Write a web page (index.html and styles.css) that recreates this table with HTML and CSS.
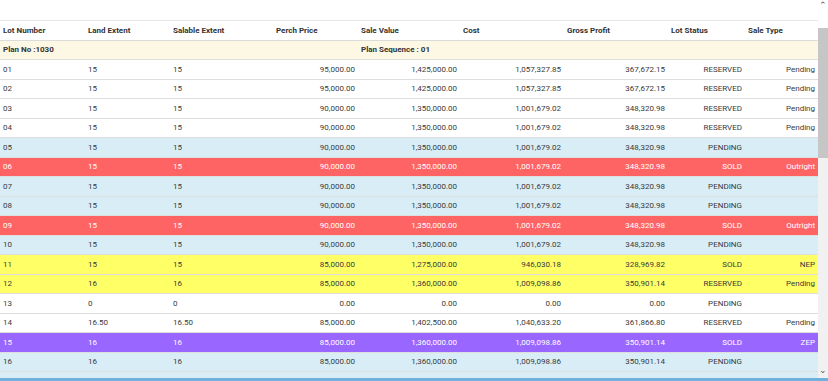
FILE: index.html
```html
<!DOCTYPE html>
<html>
<head>
	<title>Lots</title>
	<meta name="viewport" content="width=device-width, initial-scale=1.0">
	<link rel="stylesheet" href="styles.css">
</head>
<body>

	<div class="panel">
		<div class="grid">
			<div class="gap"></div>
			<table id="table">
				<colgroup>
					<col class="c1"><col class="c2"><col class="c3"><col class="c4"><col class="c5">
					<col class="c6"><col class="c7"><col class="c8"><col class="c9">
				</colgroup>
				<tr class="frst">
					<th>Lot Number</th>
					<th>Land Extent</th>
					<th>Salable Extent</th>
					<th>Perch Price</th>
					<th>Sale Value</th>
					<th>Cost</th>
					<th>Gross Profit</th>
					<th>Lot Status</th>
					<th>Sale Type</th>
				</tr>
				<tr class="plan">
					<td colspan="4">Plan No :1030</td>
					<td colspan="5">Plan Sequence : 01</td>
				</tr>
			</table>
		</div>
		<div class="bar">
			<span class="arrow">&#8963;</span>
			<div class="thumb"></div>
			<div class="track"></div>
			<span class="arrow down">&#8964;</span>
		</div>
	</div>
	<div class="foot"></div>

	<script type="text/javascript">

		let lots = [
			["01","15","15","95,000.00","1,425,000.00","1,057,327.85","367,672.15","RESERVED","Pending",""],
			["02","15","15","95,000.00","1,425,000.00","1,057,327.85","367,672.15","RESERVED","Pending",""],
			["03","15","15","90,000.00","1,350,000.00","1,001,679.02","348,320.98","RESERVED","Pending",""],
			["04","15","15","90,000.00","1,350,000.00","1,001,679.02","348,320.98","RESERVED","Pending",""],
			["05","15","15","90,000.00","1,350,000.00","1,001,679.02","348,320.98","PENDING","","info"],
			["06","15","15","90,000.00","1,350,000.00","1,001,679.02","348,320.98","SOLD","Outright","sold"],
			["07","15","15","90,000.00","1,350,000.00","1,001,679.02","348,320.98","PENDING","","info"],
			["08","15","15","90,000.00","1,350,000.00","1,001,679.02","348,320.98","PENDING","","info"],
			["09","15","15","90,000.00","1,350,000.00","1,001,679.02","348,320.98","SOLD","Outright","sold"],
			["10","15","15","90,000.00","1,350,000.00","1,001,679.02","348,320.98","PENDING","","info"],
			["11","15","15","85,000.00","1,275,000.00","946,030.18","328,969.82","SOLD","NEP","nep"],
			["12","16","16","85,000.00","1,360,000.00","1,009,098.86","350,901.14","RESERVED","Pending","nep"],
			["13","0","0","0.00","0.00","0.00","0.00","PENDING","",""],
			["14","16.50","16.50","85,000.00","1,402,500.00","1,040,633.20","361,866.80","RESERVED","Pending",""],
			["15","16","16","85,000.00","1,360,000.00","1,009,098.86","350,901.14","SOLD","ZEP","zep"],
			["16","16","16","85,000.00","1,360,000.00","1,009,098.86","350,901.14","PENDING","","info"],
			["17","16","16","85,000.00","1,360,000.00","1,009,098.86","350,901.14","PENDING","","info"]
		];

		let table = document.querySelector("#table");

		lots.forEach((lot)=>{
			table.innerHTML += `
			<tr class="${lot[9]}">
				<td>${lot[0]}</td>
				<td>${lot[1]}</td>
				<td>${lot[2]}</td>
				<td class="num">${lot[3]}</td>
				<td class="num">${lot[4]}</td>
				<td class="num">${lot[5]}</td>
				<td class="num">${lot[6]}</td>
				<td class="num">${lot[7]}</td>
				<td class="num">${lot[8]}</td>
			</tr>
			`
		});

	</script>

</body>
</html>
```

FILE: styles.css
```css
*{
	box-sizing: border-box;
	font-family: Roboto, 'Liberation Sans', sans-serif;
}
html,body{
	width: 100%;
	height: 100%;
}
body{
	margin: 0px;
	overflow: hidden;
	background: white;
}

.panel{
	display: flex;
	height: 378px;
}

.grid{
	flex: 1;
	overflow: hidden;
}

.gap{
	height: 21px;
	border-bottom: 1px solid #e6e6e6;
}

table{
	width: 818px;
	border-collapse: collapse;
	table-layout: fixed;
	font-size: 8px;
	color: #333;
}

.c1{ width: 85px; }
.c2{ width: 85px; }
.c3{ width: 103px; }
.c4{ width: 85px; }
.c5{ width: 102px; }
.c6{ width: 104px; }
.c7{ width: 104px; }
.c8{ width: 77px; }
.c9{ width: 73px; }

table tr th{
	text-align: left;
	font-weight: bold;
	height: 19px;
	padding: 0px 3px;
	color: #333;
	border-bottom: 1px solid #dcdcdc;
}

table tr td{
	height: 19.5px;
	padding: 0px 3px;
	color: #3a3a3a;
	border-bottom: 1.5px solid #dedede;
	white-space: nowrap;
}

table tr td.num{
	text-align: right;
}

table .plan td{
	background: #fcf8e3;
	font-weight: bold;
	color: #333;
	height: 19.5px;
}

table .info td{
	background: #d9edf7;
}

table .sold td{
	background: #ff6464;
	color: #fff;
}

table .nep td{
	background: #ffff66;
}

table .zep td{
	background: #9966ff;
	color: #fff;
}

.bar{
	width: 10px;
	display: flex;
	flex-direction: column;
	align-items: center;
	background: #f1f1f1;
}

.bar .arrow{
	height: 28px;
	width: 100%;
	background: white;
	font-size: 9px;
	line-height: 10px;
	color: #555;
	text-align: center;
}

.bar .down{
	height: 10px;
	line-height: 4px;
	background: #f1f1f1;
}

.bar .thumb{
	width: 100%;
	height: 130px;
	background: #c6c6c6;
}

.bar .track{
	flex: 1;
}

.foot{
	height: 3px;
	background: #6fb0dc;
}
```
